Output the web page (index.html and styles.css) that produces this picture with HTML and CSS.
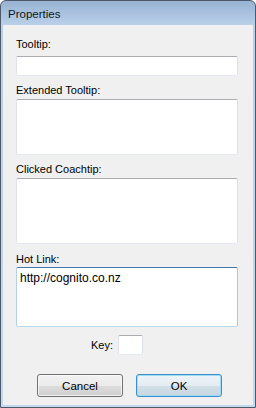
FILE: index.html
```html
<!DOCTYPE html>
<html lang="en">
<head>
  <meta charset="UTF-8">
  <title>Properties</title>
  <link rel="stylesheet" href="styles.css">
</head>
<body>
<div class="window">
  <div class="titlebar">
    <span class="title">Properties</span>
  </div>

  <div class="client">
    <label class="field-label first" for="tooltip">Tooltip:</label>
    <input id="tooltip" class="textbox single" type="text">

    <label class="field-label" for="extended">Extended Tooltip:</label>
    <textarea id="extended" class="textbox extended"></textarea>

    <label class="field-label" for="coachtip">Clicked Coachtip:</label>
    <textarea id="coachtip" class="textbox coachtip"></textarea>

    <label class="field-label hotlink-label" for="hotlink">Hot Link:</label>
    <textarea id="hotlink" class="textbox hotlink focused">http://cognito.co.nz</textarea>

    <div class="key-row">
      <label class="key-label" for="key">Key:</label>
      <input id="key" class="textbox key" type="text">
    </div>

    <div class="button-row">
      <button class="btn">Cancel</button>
      <button class="btn default">OK</button>
    </div>
  </div>
</div>
</body>
</html>
```

FILE: styles.css
```css
* {
  margin: 0;
  padding: 0;
  box-sizing: border-box;
}

body {
  width: 256px;
  height: 408px;
  font-family: "Liberation Sans", Arial, sans-serif;
  font-size: 11px;
  color: #000;
  background: #fff;
}

.window {
  display: flex;
  flex-direction: column;
  width: 256px;
  height: 408px;
  border: 1px solid #4d5a69;
  border-radius: 6px 6px 0 0;
  background: linear-gradient(#98b3d3 0, #bad0e9 24px, #c4d8ee 100%);
  overflow: hidden;
}

.titlebar {
  display: flex;
  align-items: center;
  height: 24px;
  padding: 1px 0 0 7px;
  flex-shrink: 0;
}

.title {
  font-size: 11.5px;
  color: #101820;
}

.client {
  flex: 1;
  display: flex;
  flex-direction: column;
  margin: 0 2px 2px 2px;
  padding: 13px 15px 0 13px;
  background: #f0f0f0;
}

.field-label {
  display: block;
  line-height: 13px;
  margin-top: 8px;
  margin-bottom: 2px;
}

.field-label.first {
  margin-top: 0;
  margin-bottom: 5px;
}

.hotlink-label {
  margin-top: 9px;
  margin-bottom: 1px;
}

.textbox {
  display: block;
  width: 100%;
  border: 1px solid;
  border-color: #abadb3 #dbdfe6 #e3e9ef #e2e3ea;
  border-radius: 2px;
  background: #fff;
  font-family: "Liberation Sans", Arial, sans-serif;
  font-size: 12px;
  line-height: 15px;
  padding: 3px 3px;
  color: #000;
  resize: none;
  outline: none;
}

.single {
  height: 20px;
}

.extended {
  height: 56px;
}

.coachtip {
  height: 66px;
}

.hotlink {
  height: 60px;
}

.focused {
  border-color: #3d7bad #a4c9e3 #b7d9ed #b5cfe7;
}

.key-row {
  display: flex;
  align-items: center;
  gap: 5px;
  margin-top: 8px;
  padding-left: 75px;
}

.key-label {
  line-height: 13px;
}

.textbox.key {
  width: 25px;
  height: 20px;
}

.button-row {
  display: flex;
  gap: 13px;
  margin-top: 19px;
  padding-left: 21px;
}

.btn {
  width: 86px;
  height: 23px;
  border: 1px solid #707070;
  border-radius: 3px;
  background: linear-gradient(#f2f2f2 0%, #ebebeb 50%, #dddddd 50%, #cfcfcf 100%);
  box-shadow: inset 0 0 0 1px rgba(255, 255, 255, 0.7);
  font-family: "Liberation Sans", Arial, sans-serif;
  font-size: 11.5px;
  color: #000;
}

.btn.default {
  border-color: #3c8fc9;
  background: linear-gradient(#eef4f8 0%, #e4edf3 50%, #d3e0e8 50%, #c6d6e0 100%);
  box-shadow: inset 0 0 0 1px #9edcf7;
}
```
